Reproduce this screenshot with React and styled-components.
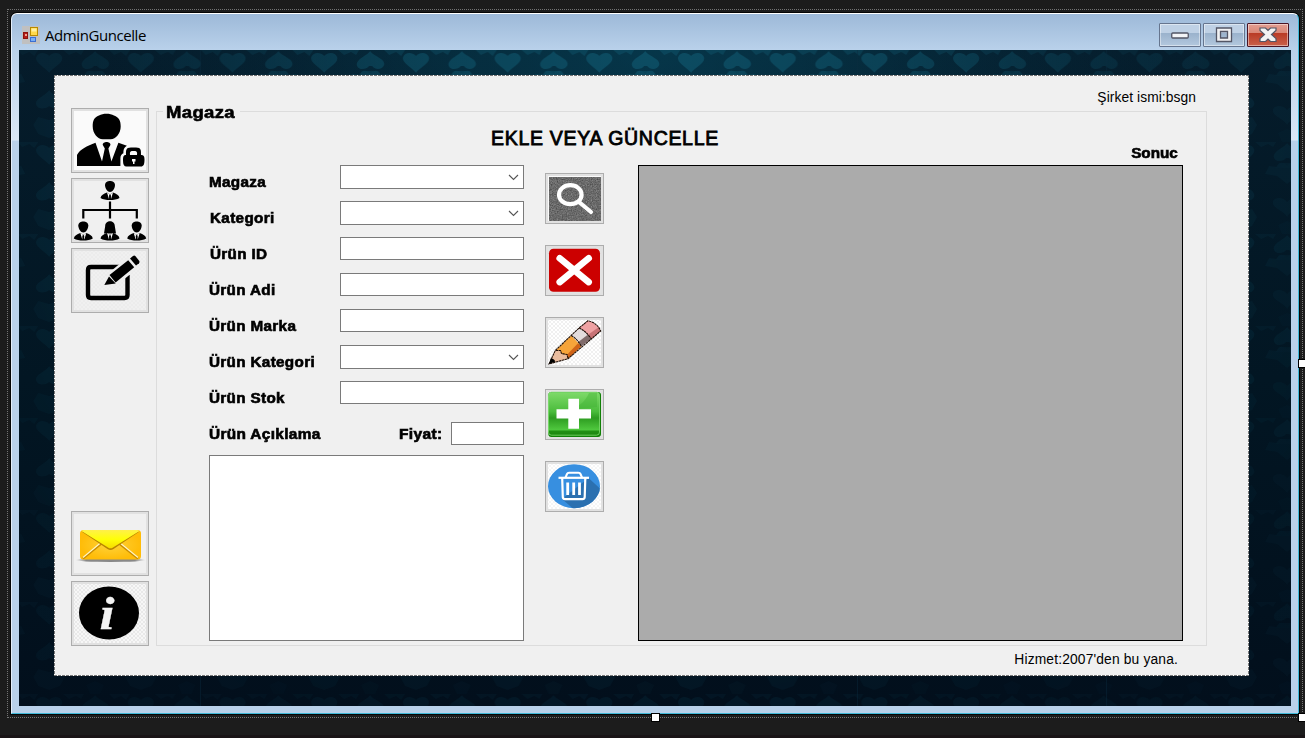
import React from "react";
import styled, { createGlobalStyle, css } from "styled-components";

const GlobalStyle = createGlobalStyle`
  * { box-sizing: border-box; }
  body { margin: 0; background: #1c1c1c; color: #000; overflow: hidden;
    font-family: "Liberation Sans", Arial, sans-serif; }
  svg { display: block; }
`;

const Designer = styled.div`
  position: relative;
  width: 1305px;
  height: 738px;
  padding: 9px 0 0 7px;
  background: #1c1c1c;
  border-bottom: 3px solid #191416;
`;

const SelectionFrame = styled.div`
  width: 1296px;
  height: 709px;
  padding: 3px;
  border: 1px dotted #747474;
`;

const Handle = styled.i`
  position: absolute;
  left: ${(p) => p.$x}px;
  top: ${(p) => p.$y}px;
  width: 9px;
  height: 9px;
  background: #fff;
  border: 1px solid #000;
`;

const Window = styled.div`
  width: 1288px;
  height: 701px;
  display: flex;
  flex-direction: column;
  padding: 0 7px 7px;
  border: 1px solid #3fb8d8;
  border-top-color: #fff;
  border-left-color: #e4eefa;
  border-radius: 6px 6px 0 0;
  box-shadow: 0 0 0 1px #050505;
  background:
    linear-gradient(#9db9d8, #b9d1ea) 0 0 / 100% 36px no-repeat,
    linear-gradient(#b9d1ea 36px, #dae7f5 126px, #b9d1ea 127px);
`;

const TitleBar = styled.header`
  flex: 0 0 36px;
  display: flex;
  align-items: flex-start;
  padding: 9px 2px 0 3px;
`;

const AppIconSlot = styled.span`
  padding-top: 3px;
`;

const Caption = styled.span`
  margin-left: 5px;
  padding-top: 1px;
  flex: 1;
  font: 15px/22px "Open Sans", "Noto Sans", sans-serif;
  letter-spacing: -0.42px;
`;

const CaptionButtons = styled.div`
  display: flex;
  gap: 2px;
`;

const CaptionButton = styled.div`
  width: 42px;
  height: 24px;
  display: grid;
  place-items: center;
  border: 1px solid #66758e;
  border-radius: 1px;
  box-shadow: inset 0 0 0 1px rgba(255, 255, 255, 0.45);
  background: linear-gradient(#bfd1e5 0 40%, #9ab2cc 41%, #b3c8de);
  ${(p) =>
    p.$close &&
    css`
      border-color: #4a1424;
      background: linear-gradient(#e39e92, #d98777 40%, #b93a25 41%, #c9604a);
    `}
`;

const Client = styled.main`
  position: relative;
  flex: 1;
  padding: 25px 42px 30px 35px;
  overflow: hidden;
`;

const Wallpaper = styled.svg`
  position: absolute;
  inset: 0;
`;

const Panel = styled.section`
  position: relative;
  width: 1195px;
  height: 601px;
  padding: 12px 42px 0 17px;
  background:
    repeating-linear-gradient(90deg, #777 0 3px, #fff 3px 4px) 0 0 / 100% 1px no-repeat,
    repeating-linear-gradient(90deg, #777 0 3px, #fff 3px 4px) 0 100% / 100% 1px no-repeat,
    repeating-linear-gradient(#777 0 3px, #fff 3px 4px) 0 0 / 1px 100% no-repeat,
    repeating-linear-gradient(#777 0 3px, #fff 3px 4px) 100% 0 / 1px 100% no-repeat,
    #f0f0f0;
`;

const Note = styled.p`
  margin: 0;
  padding-right: ${(p) => p.$inset}px;
  text-align: right;
  font-size: 13.8px;
  line-height: ${(p) => p.$line}px;
  letter-spacing: ${(p) => p.$spacing}px;
`;

const Columns = styled.div`
  display: flex;
  gap: 7px;
  height: 538px;
`;

const SideBar = styled.nav`
  display: flex;
  flex-direction: column;
  gap: 5px;
  width: 78px;
`;

const IconButton = styled.button`
  display: block;
  padding: 0;
  width: ${(p) => (p.$small ? 59 : 78)}px;
  height: ${(p) => (p.$small ? 51 : 65)}px;
  margin-top: ${(p) => (p.$push ? "auto" : 0)};
  border: 0;
  background: #f0f0f0;
  box-shadow: inset 0 0 0 1px #adadad, inset 0 0 0 3px #e1e1e1;
`;

const GroupBox = styled.section`
  width: 1051px;
  height: 535px;
  margin-top: 3px;
  border: 1px solid #dcdcdc;
  padding: 0 23px 0 52px;
`;

const heavy = css`
  font-weight: 700;
  -webkit-text-stroke: 0.6px #000;
`;

const Wide = styled.span`
  display: inline-block;
  transform: scaleX(${(p) => p.$by || 1.09});
  transform-origin: ${(p) => (p.$end ? "right" : "left")} center;
`;

const Legend = styled.h2`
  ${heavy}
  width: 77px;
  height: 21px;
  margin: -10px 0 0 -46px;
  padding-left: 3px;
  background: #f0f0f0;
  font-size: 17px;
  line-height: 21px;
  letter-spacing: 0.3px;
`;

const Title = styled.h1`
  margin: 3px 0 0 282px;
  height: 25px;
  font-size: 19.5px;
  font-weight: 400;
  line-height: 25px;
  letter-spacing: 0.7px;
  -webkit-text-stroke: 0.85px #000;
  white-space: nowrap;
`;

const Body = styled.div`
  display: flex;
  margin-top: 14px;
`;

const Form = styled.form`
  width: 315px;
`;

const Row = styled.div`
  display: flex;
  height: 36px;
`;

const Label = styled.label`
  ${heavy}
  width: ${(p) => p.$width || 131}px;
  padding-left: ${(p) => p.$indent || 0}px;
  font-size: 14px;
  line-height: 34px;
  letter-spacing: 0.3px;
  white-space: nowrap;
`;

const TextBox = styled.input`
  width: ${(p) => p.$width || 184}px;
  height: 23px;
  margin: ${(p) => p.$drop || 0}px 0 0;
  border: 1px solid #7a7a7a;
  border-radius: 0;
  background: #fff;
`;

const ComboBox = styled.div`
  width: 184px;
  height: 24px;
  display: flex;
  align-items: center;
  justify-content: flex-end;
  padding-right: 4px;
  border: 1px solid #7a7a7a;
  background: #fff;
`;

const Description = styled.textarea`
  display: block;
  width: 315px;
  height: 186px;
  margin: 2px 0 0;
  border: 1px solid #7a7a7a;
  border-radius: 0;
  background: #fff;
  resize: none;
`;

const Tools = styled.div`
  display: flex;
  flex-direction: column;
  gap: 21px;
  padding-top: 8px;
  margin-left: 21px;
`;

const Result = styled.div`
  width: 545px;
  margin: -22px 0 0 34px;
`;

const ResultLabel = styled.div`
  ${heavy}
  height: 22px;
  padding-right: 5px;
  text-align: right;
  font-size: 14px;
  line-height: 21px;
  letter-spacing: 0;
`;

const DataGrid = styled.div`
  height: 476px;
  border: 1px solid #000;
  background: #ababab;
`;

const Checker = ({ id, w, h, color = "#e3e3e3", fill = "#fbfbfb" }) => (
  <>
    <defs>
      <pattern id={id} width="4" height="4" patternUnits="userSpaceOnUse">
        <rect width="4" height="4" fill={fill} />
        <path d="M0 0h2v2H0zM2 2h2v2H2z" fill={color} />
      </pattern>
    </defs>
    <rect x="3" y="3" width={w} height={h} fill={`url(#${id})`} />
  </>
);

const AppIcon = () => (
  <svg width="18" height="18" viewBox="0 0 18 18">
    <rect width="18" height="18" fill="#c0c0c0" />
    <rect x="1.5" y="6.5" width="4" height="6" fill="#b51e18" stroke="#8c120e" />
    <path d="M3 8h2v2H3z" fill="#f0a090" />
    <rect x="8.5" y="1.5" width="7" height="8" fill="#ffd84a" stroke="#b88900" />
    <path d="M9.5 2.5h5v3h-5z" fill="#fff0a0" />
    <rect x="8.5" y="11.5" width="5" height="4" fill="#78aef5" stroke="#3c6fd0" />
  </svg>
);

const MinimizeGlyph = () => (
  <svg width="18" height="8" viewBox="0 0 18 8">
    <rect x="0.75" y="2" width="16.5" height="5" rx="1" fill="#f3f4f7" stroke="#535666" strokeWidth="1.3" />
  </svg>
);

const MaximizeGlyph = () => (
  <svg width="18" height="16" viewBox="0 0 18 16">
    <path fillRule="evenodd" d="M1.5 1h15v13.5h-15zM5.5 4.500v6.500h7v-6.500z" fill="#f0f1f3" stroke="#535666" strokeWidth="1.3" />
  </svg>
);

const CloseGlyph = () => (
  <svg width="18" height="16" viewBox="0 0 18 16">
    <path d="M1 1h5.500L9 3.500 11.500 1H17v2.500l-4.500 4 4.500 4V14.500h-5.500L9 12l-2.500 2.500H1v-3l4.500-4L1 3.500z" fill="#f2f2f2" stroke="#535666" strokeWidth="1.2" />
  </svg>
);

const Chevron = () => (
  <svg width="11" height="7" viewBox="0 0 11 7">
    <path d="M1 1l4.500 4.500L10 1" fill="none" stroke="#555" strokeWidth="1.1" />
  </svg>
);

const AdminIcon = () => (
  <svg width="78" height="65" viewBox="0 0 78 65">
    <rect x="3" y="3" width="72" height="59" fill="#fafafa" />
    <path d="M28 7.500C32 5.300 39 5.300 43 7.500c5 2 6.700 5 6.700 11 0 7-5 12.700-10 12.700h-8c-5 0-10-5.700-10-12.700 0-6 1.300-9 6.300-11z" />
    <path d="M6 58V47c3-6 10-9 18.500-12.300L31 53.500l2.800-13-2-3.500c-.5-2 2-3 3.800-3s4.300 1 3.800 3l-2 3.500 3 13 7-18.800 8.500 3c-3 2-3.500 4-3.500 7.500-2 1-3 2.500-3 5V58z" />
    <path fillRule="evenodd" d="M55 47c0-4-.5-7.500 5-7.500h5c5.500 0 5 3.500 5 7.500 2.500 0 3.500 1 3.500 4.500 0 5-1 7-3.500 7H55.500c-2.500 0-3.500-2-3.500-6 0-4 .5-5.500 3-5.500zm4 0h7c.5-3-.5-4-2-4h-3c-1.500 0-2.500 1-2 4zm2 4v2.500h1V56h1.500v-2.500h1V51z" />
  </svg>
);

const Person = ({ x, y, long }) => (
  <g transform={`translate(${x} ${y})`}>
    <path d={long ? "M-4.800-1C-5-7.500 5-7.500 4.800-1L6 6.500H-6z" : "M-5-1.500C-5-7 5-7 5-1.500 5 2 2.500 5.500 0 5.500S-5 2-5-1.500z"} />
    <path d="M-9.500 11.500C-9 8.500-6.500 7.500-3 6l3 2 3-2c3.500 1.500 6 2.500 6.500 5.500C5 14.300-5 14.300-9.500 11.500z" />
    <path d="M-3 6l2 6.500L0 8.500l1 4L3 6 0 8z" fill="#fff" />
    <path d="M0 7.500l1 1.500-.4 4h-1.200L-1 9z" />
  </g>
);

const OrgIcon = () => (
  <svg width="78" height="65" viewBox="0 0 78 65">
    <Person x={39} y={8.5} />
    <path d="M39 23.500v17M12.300 40.500V32h53.500v8.500" fill="none" stroke="#000" strokeWidth="2.2" />
    <Person x={12.3} y={49} />
    <Person x={39} y={49} long />
    <Person x={65.7} y={49} />
  </svg>
);

const EditIcon = () => (
  <svg width="78" height="65" viewBox="0 0 78 65">
    <Checker id="editBg" w="72" h="59" color="#ececec" fill="#f0f0f0" />
    <path d="M49 19H20q-3 0-3 3v25q0 3 3 3h33.500q3 0 3-3V27" fill="none" stroke="#000" strokeWidth="4.4" />
    <path d="M31 39.500l6-14L57 9 67 20 46 37z" fill="#eee" />
    <path d="M33.300 37l4.700-8.500 6.700 7zM38.500 27L57.200 12.200l6 7L44.600 34.500z" />
    <path d="M59 10.500l3-2.500q1.300-.8 2.300 0l4 5q.6 1.200-.3 2.200l-3 2.400z" />
  </svg>
);

const MailIcon = () => (
  <svg width="78" height="65" viewBox="0 0 78 65">
    <defs>
      <linearGradient id="mailFlap" x1="0" y1="0" x2="0" y2="1">
        <stop offset="0" stopColor="#fff04a" /><stop offset="0.5" stopColor="#ffff08" /><stop offset="1" stopColor="#f7dc00" />
      </linearGradient>
      <radialGradient id="mailBody"><stop offset="0" stopColor="#ffd33a" /><stop offset="1" stopColor="#ffbc08" /></radialGradient>
      <linearGradient id="mailShade"><stop offset="0" stopColor="#aaa" stopOpacity="0" /><stop offset="0.15" stopColor="#888" /><stop offset="0.85" stopColor="#888" /><stop offset="1" stopColor="#aaa" stopOpacity="0" /></linearGradient>
    </defs>
    <ellipse cx="39.5" cy="49" rx="35" ry="2" fill="url(#mailShade)" />
    <rect x="9" y="19" width="61" height="29.5" rx="3.5" fill="url(#mailBody)" />
    <path d="M12 47.500l18.500-15M67 47.500L48 32.500" stroke="#c88c00" strokeWidth="2.2" />
    <path d="M12 46.500l18-15M67 46.500L48.500 31.500" stroke="#fff5c4" strokeWidth="1.2" />
    <path d="M10.500 20.500l26 17.500q3 2 6 0l26-17.500" fill="#b88400" />
    <path d="M10.500 20q1-1 3-1h52q2 0 3 1L42 36.500q-2.500 1.700-5 0z" fill="url(#mailFlap)" />
  </svg>
);

const InfoIcon = () => (
  <svg width="78" height="65" viewBox="0 0 78 65">
    <Checker id="infoBg" w="72" h="59" color="#e9e9e9" fill="#f7f7f7" />
    <ellipse cx="38" cy="32" rx="30" ry="26.5" />
    <text transform="translate(28.5 47.8) scale(1.15 1)" fontFamily="Liberation Serif, serif" fontWeight="700" fontStyle="italic" fontSize="47" fill="#f3f3f3" stroke="#f3f3f3" strokeWidth="0.3">i</text>
  </svg>
);

const SearchIcon = () => (
  <svg width="59" height="51" viewBox="0 0 59 51">
    <defs>
      <filter id="grain" x="0" y="0" width="1" height="1" colorInterpolationFilters="sRGB">
        <feTurbulence type="fractalNoise" baseFrequency="0.8" numOctaves="2" seed="4" />
        <feColorMatrix values=".35 0 0 0 .24 .35 0 0 0 .24 .35 0 0 0 .24 0 0 0 0 1" />
      </filter>
    </defs>
    <rect x="3" y="3" width="53" height="45" fill="#fafafa" />
    <rect x="4" y="4" width="52" height="44" filter="url(#grain)" />
    <ellipse cx="25.3" cy="21.7" rx="11.3" ry="9.5" fill="none" stroke="#fff" strokeWidth="4.2" />
    <path d="M34 29l12 10" stroke="#fff" strokeWidth="4.2" strokeLinecap="round" />
  </svg>
);

const CancelIcon = () => (
  <svg width="59" height="51" viewBox="0 0 59 51">
    <rect x="3" y="3" width="53" height="45" fill="#e3e3e3" />
    <rect x="4" y="3.7" width="51" height="43" rx="4.5" fill="#c00" />
    <path d="M14.700 13.300l29 23.800M43.700 13.300l-29 23.800" stroke="#fff" strokeWidth="6.6" strokeLinecap="round" />
  </svg>
);

const PencilIcon = () => (
  <svg width="59" height="51" viewBox="0 0 59 51">
    <Checker id="pencilBg" w="53" h="45" color="#f0f0f0" fill="#fff" />
    <path d="M4 47l6-13.500 6 0 .5 3 6 1 .5 4z" fill="#e9bc9f" />
    <path d="M10.500 33.500L26.300 18.500l10 10.800L23 41.700l-1-4-5.500-1-1-3.200z" fill="#f6a43a" />
    <path d="M36.300 29.300L23 41.700l-1-4 11-11.500z" fill="#cf6318" />
    <path d="M26.300 18.500L34 11q7 3 12 11l-9.700 7.300Q32 22 26.300 18.500z" fill="#e3dcdc" />
    <path d="M43 17.500l3 4.500-9.700 7.300-3.300-4z" fill="#806b6b" />
    <path d="M34 11l9-7.300q9 2 12.700 10L46.300 22Q41 14 34 11z" fill="#efa2a3" />
    <path d="M54 10l1.700 4L46.300 22l-3-4.500z" fill="#c87376" />
    <path d="M4 47l6.300-13.500L34 11l9-7.300q9 2 12.700 10.300L23 41.700zM10.500 33.500h5l1 3 5.500 1 1 4M26.300 18.500q6 3.500 10 10.800M34 11q7 3 12.300 11" fill="none" stroke="#201008" strokeWidth="1.1" strokeDasharray="2.5 0.5" />
    <path d="M4 47l2-6q3.500 1 4.500 3.500z" />
  </svg>
);

const AddIcon = () => (
  <svg width="59" height="51" viewBox="0 0 59 51">
    <defs>
      <linearGradient id="addFace" x1="0" y1="0" x2="0" y2="1">
        <stop offset="0" stopColor="#7fda6a" /><stop offset="0.45" stopColor="#4abc3b" /><stop offset="0.6" stopColor="#2d9c20" /><stop offset="0.88" stopColor="#50c93f" /><stop offset="0.9" stopColor="#218f14" /><stop offset="1" stopColor="#1b870e" />
      </linearGradient>
    </defs>
    <rect x="3.3" y="3" width="52.7" height="45" rx="3" fill="#118006" />
    <rect x="3.5" y="3.2" width="51" height="43" rx="3" fill="url(#addFace)" stroke="#83df73" strokeWidth="0.8" />
    <path d="M44 4q-6 14-22 17l30-3V4z" fill="#3fae31" opacity="0.4" />
    <path d="M23.300 9.700H34v10.600h12v9.200H34v10.200H23.300V29.500H11.500v-9.200h11.800z" fill="#fff" />
  </svg>
);

const TrashIcon = () => (
  <svg width="59" height="51" viewBox="0 0 59 51">
    <Checker id="trashBg" w="53" h="45" color="#f5f5f5" fill="#fff" />
    <defs><clipPath id="disc"><ellipse cx="29" cy="25.2" rx="26" ry="22" /></clipPath></defs>
    <g clipPath="url(#disc)">
      <rect width="59" height="51" fill="#378fe0" />
      <path d="M43.500 17L59 31v20H32L17 38z" fill="#2b70b0" />
    </g>
    <g fill="none" stroke="#fff">
      <path d="M13.500 16.800h30.500" strokeWidth="2.2" />
      <path d="M20.500 16.500l1.500-3.500q.5-1.200 2-1.200h9.500q1.500 0 2 1.200l1.500 3.500" strokeWidth="2" />
      <path d="M17.200 17l.6 19.200q.2 2 2.200 2h17.500q2 0 2.200-2L40.300 17" strokeWidth="2.2" />
      <path d="M22.700 21.500v12.500M28.700 21.500v12.500M34.500 21.500v12.500" strokeWidth="2.8" />
    </g>
  </svg>
);

const Damask = () => (
  <Wallpaper width="1272" height="656">
    <defs>
      <linearGradient id="depth" x1="0" y1="0" x2="0" y2="1">
        <stop offset="0" stopColor="#051c2b" /><stop offset="0.5" stopColor="#021623" /><stop offset="1" stopColor="#020f1c" />
      </linearGradient>
      <radialGradient id="glow" gradientUnits="userSpaceOnUse" cx="632" cy="0" r="560" gradientTransform="scale(1 .6)">
        <stop offset="0" stopColor="#075068" stopOpacity="0.5" /><stop offset="0.35" stopColor="#07485e" stopOpacity="0.38" /><stop offset="1" stopColor="#063044" stopOpacity="0" />
      </radialGradient>
      <radialGradient id="fade" gradientUnits="userSpaceOnUse" cx="632" cy="0" r="760">
        <stop offset="0" stopColor="#fff" stopOpacity="1" /><stop offset="0.3" stopColor="#fff" stopOpacity="0.8" /><stop offset="0.6" stopColor="#fff" stopOpacity="0.38" /><stop offset="1" stopColor="#fff" stopOpacity="0.14" />
      </radialGradient>
      <mask id="soft"><rect width="1272" height="656" fill="url(#fade)" /></mask>
      <pattern id="hearts" x="30" y="0" width="91.7" height="92" patternUnits="userSpaceOnUse">
        <g fill="#126078">
          <path d="M46 1c-3 5-15 8-13 15 2 5 10 3 12 0h3c3 4 10 4 12-1 2-6-11-9-14-14z" />
          <path d="M0 23c4-6 15-10 13-16C11 2 4 2 0 6zM92 23c-4-6-15-10-13-16 2-5 9-5 13-1z" />
          <path d="M14 0l6 5 7-3 5 3 3-5zM60 0l5 5 7-3 5 4 4-6zM34 26l5-5 14 0 5 5z" opacity=".7" />
          <path d="M46 24c-3-5-10-4-10 1l-8-1-4 8 12 2 10 8 10-8 12-2-4-8-8 1c0-5-7-6-10-1z" opacity=".7" />
          <path d="M0 40c5 7 15 8 13 15-2 5-9 4-13 1zM92 40c-5 7-15 8-13 15 2 5 9 4 13 1z" />
          <path d="M46 75c-4-7-16-9-14-16 3-5 11-3 14 1 3-4 11-6 14-1 2 7-10 9-14 16z" opacity=".7" />
          <path d="M0 70l11-3 5 8-5 9-11 4zM92 70l-11-3-5 8 5 9 11 4z" opacity=".7" />
          <path d="M46 79l9 4-4 9H41l-4-9z" opacity=".4" />
        </g>
      </pattern>
    </defs>
    <rect width="1272" height="656" fill="url(#depth)" />
    <rect width="1272" height="656" fill="url(#glow)" />
    <rect width="1272" height="656" fill="url(#hearts)" mask="url(#soft)" opacity="0.55" />
    <path d="M181.500 0v656M838.500 0v656M1087.500 0v656" stroke="#0b2c40" opacity="0.4" />
  </Wallpaper>
);

const fields = [
  { label: "Magaza", combo: true },
  { label: "Kategori", combo: true, indent: 1 },
  { label: "Ürün ID", indent: 1 },
  { label: "Ürün Adi" },
  { label: "Ürün Marka" },
  { label: "Ürün Kategori", combo: true },
  { label: "Ürün Stok" },
];

const tools = [SearchIcon, CancelIcon, PencilIcon, AddIcon, TrashIcon];

const navigation = [
  { Icon: AdminIcon },
  { Icon: OrgIcon },
  { Icon: EditIcon },
  { Icon: MailIcon, push: true },
  { Icon: InfoIcon },
];

export default function App() {
  return (
    <Designer>
      <GlobalStyle />
      <SelectionFrame>
        <Window>
          <TitleBar>
            <AppIconSlot><AppIcon /></AppIconSlot>
            <Caption>AdminGuncelle</Caption>
            <CaptionButtons>
              <CaptionButton><MinimizeGlyph /></CaptionButton>
              <CaptionButton><MaximizeGlyph /></CaptionButton>
              <CaptionButton $close><CloseGlyph /></CaptionButton>
            </CaptionButtons>
          </TitleBar>
          <Client>
            <Damask />
            <Panel>
              <Note $inset={11} $line={21} $spacing={0.08}>Şirket ismi:bsgn</Note>
              <Columns>
                <SideBar>
                  {navigation.map(({ Icon, push }, i) => (
                    <IconButton key={i} $push={push}><Icon /></IconButton>
                  ))}
                </SideBar>
                <GroupBox>
                  <Legend><Wide $by={1.09}>Magaza</Wide></Legend>
                  <Title>EKLE VEYA GÜNCELLE</Title>
                  <Body>
                    <Form>
                      {fields.map(({ label, combo, indent }) => (
                        <Row key={label}>
                          <Label $indent={indent}><Wide>{label}</Wide></Label>
                          {combo ? <ComboBox><Chevron /></ComboBox> : <TextBox />}
                        </Row>
                      ))}
                      <Row>
                        <Label $width={190}><Wide $by={1.1}>Ürün Açıklama</Wide></Label>
                        <Label $width={52}><Wide $by={1.11}>Fiyat:</Wide></Label>
                        <TextBox $width={73} $drop={5} />
                      </Row>
                      <Description />
                    </Form>
                    <Tools>
                      {tools.map((Icon, i) => (
                        <IconButton key={i} $small><Icon /></IconButton>
                      ))}
                    </Tools>
                    <Result>
                      <ResultLabel><Wide $end>Sonuc</Wide></ResultLabel>
                      <DataGrid />
                    </Result>
                  </Body>
                </GroupBox>
              </Columns>
              <Note $inset={29} $line={28} $spacing={0.16}>Hizmet:2007'den bu yana.</Note>
            </Panel>
          </Client>
        </Window>
      </SelectionFrame>
      <Handle $x={1298} $y={359} />
      <Handle $x={651} $y={713} />
      <Handle $x={1298} $y={713} />
    </Designer>
  );
}
